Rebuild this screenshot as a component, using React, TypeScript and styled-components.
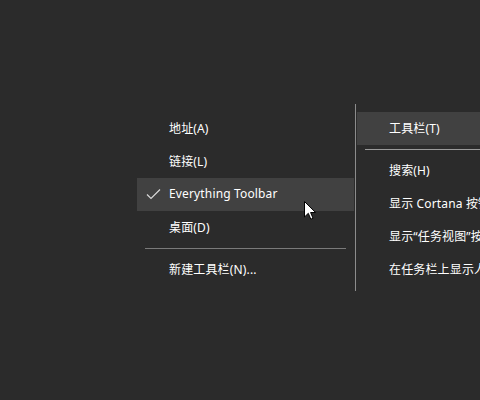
import React from "react";
import styled, { createGlobalStyle } from "styled-components";

const Global = createGlobalStyle`
  html, body {
    margin: 0;
    padding: 0;
    background: #2b2b2b;
  }
  body {
    font-family: "Noto Sans", "Noto Sans CJK SC", sans-serif;
  }
`;

const Desktop = styled.div`
  position: relative;
  width: 480px;
  height: 400px;
  overflow: hidden;
  background: #2b2b2b;
  display: flex;
  align-items: flex-start;
  padding: 104px 0 0 137px;
  box-sizing: border-box;
`;

const Menu = styled.div<{ $width?: number; $bordered?: boolean }>`
  display: flex;
  flex-direction: column;
  flex-shrink: 0;
  width: ${(p) => (p.$width ? `${p.$width}px` : "auto")};
  padding: 8px 0 5px 0;
  box-sizing: border-box;
  ${(p) =>
    p.$bordered
      ? `border-left: 1px solid #8c8c8c; margin-left: 1px; padding-left: 1px; flex: 1;`
      : ""}
`;

const Item = styled.div<{ $active?: boolean; $indent: number }>`
  position: relative;
  height: 33px;
  display: flex;
  align-items: center;
  padding-left: ${(p) => p.$indent}px;
  padding-bottom: 2px;
  box-sizing: border-box;
  background: ${(p) => (p.$active ? "#414141" : "transparent")};
  color: #ffffff;
  font-size: 12px;
  white-space: nowrap;
  letter-spacing: 0.15px;
`;

const Check = styled.svg`
  position: absolute;
  left: 9px;
  top: 10px;
`;

const Separator = styled.div<{ $left: number; $right: number; $color: string }>`
  height: 1px;
  margin: 4px ${(p) => p.$right}px 4px ${(p) => p.$left}px;
  background: ${(p) => p.$color};
`;

const Pointer = styled.svg`
  position: absolute;
  left: 304px;
  top: 201px;
`;

export default function App() {
  return (
    <>
      <Global />
      <Desktop>
        <Menu $width={217}>
          <Item $indent={32}>地址(A)</Item>
          <Item $indent={32}>链接(L)</Item>
          <Item $indent={32} $active>
            <Check width="15" height="12" viewBox="0 0 15 12">
              <path d="M1 6.5 L5 10.5 L14 1.5" fill="none" stroke="#d8d8d8" strokeWidth="1.2" />
            </Check>
            Everything Toolbar
          </Item>
          <Item $indent={32}>桌面(D)</Item>
          <Separator $left={8} $right={8} $color="#7a7a7a" />
          <Item $indent={32}>新建工具栏(N)...</Item>
        </Menu>
        <Menu $bordered>
          <Item $indent={32} $active>工具栏(T)</Item>
          <Separator $left={8} $right={0} $color="#9a9a9a" />
          <Item $indent={32}>搜索(H)</Item>
          <Item $indent={32}>显示 Cortana 按钮(P)</Item>
          <Item $indent={32}>显示“任务视图”按钮(V)</Item>
          <Item $indent={32}>在任务栏上显示人脉(P)</Item>
        </Menu>
        <Pointer width="13" height="20" viewBox="0 0 13 20">
          <path
            d="M0.5 0.5 L0.5 16 L4.3 12.3 L6.8 18.2 L9 17.2 L6.6 11.5 L11.6 11.5 Z"
            fill="#ffffff"
            stroke="#000000"
            strokeWidth="1"
            strokeLinejoin="miter"
          />
        </Pointer>
      </Desktop>
    </>
  );
}
